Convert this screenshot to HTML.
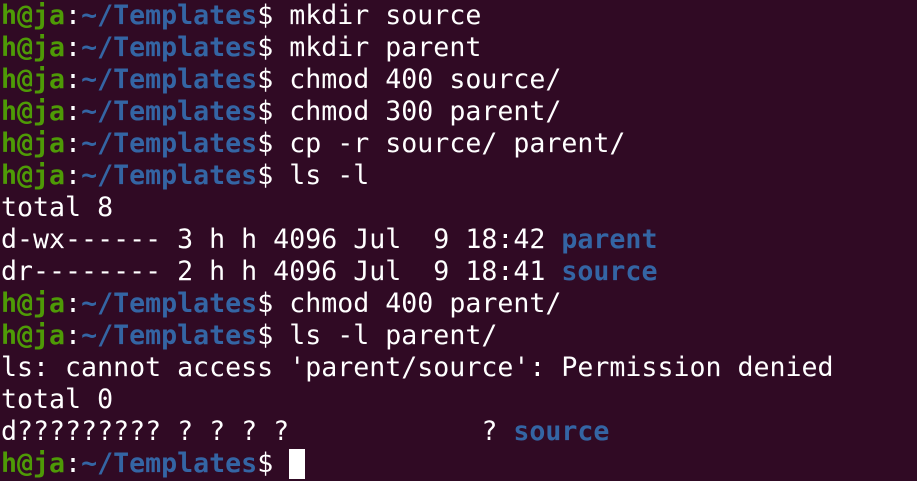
<!DOCTYPE html><html><head><style>
body{margin:0;background:#300a24;width:917px;height:481px;overflow:hidden}
pre{margin:0;padding:0 0 0 1px;font-family:"DejaVu Sans Mono","Liberation Mono",monospace;font-size:26.6px;line-height:32px;color:#fff;white-space:pre}
.g{color:#4e9a06;font-weight:bold}.b{color:#3465a4;font-weight:bold}
.c{background:#fff;display:inline-block;width:16px;height:30px;vertical-align:top;margin-top:1px}
</style></head><body><pre><span class="g">h@ja</span>:<span class="b">~/Templates</span>$ mkdir source
<span class="g">h@ja</span>:<span class="b">~/Templates</span>$ mkdir parent
<span class="g">h@ja</span>:<span class="b">~/Templates</span>$ chmod 400 source/
<span class="g">h@ja</span>:<span class="b">~/Templates</span>$ chmod 300 parent/
<span class="g">h@ja</span>:<span class="b">~/Templates</span>$ cp -r source/ parent/
<span class="g">h@ja</span>:<span class="b">~/Templates</span>$ ls -l
total 8
d-wx------ 3 h h 4096 Jul  9 18:42 <span class="b">parent</span>
dr-------- 2 h h 4096 Jul  9 18:41 <span class="b">source</span>
<span class="g">h@ja</span>:<span class="b">~/Templates</span>$ chmod 400 parent/
<span class="g">h@ja</span>:<span class="b">~/Templates</span>$ ls -l parent/
ls: cannot access 'parent/source': Permission denied
total 0
d????????? ? ? ? ?            ? <span class="b">source</span>
<span class="g">h@ja</span>:<span class="b">~/Templates</span>$ <span class="c"></span></pre></body></html>
